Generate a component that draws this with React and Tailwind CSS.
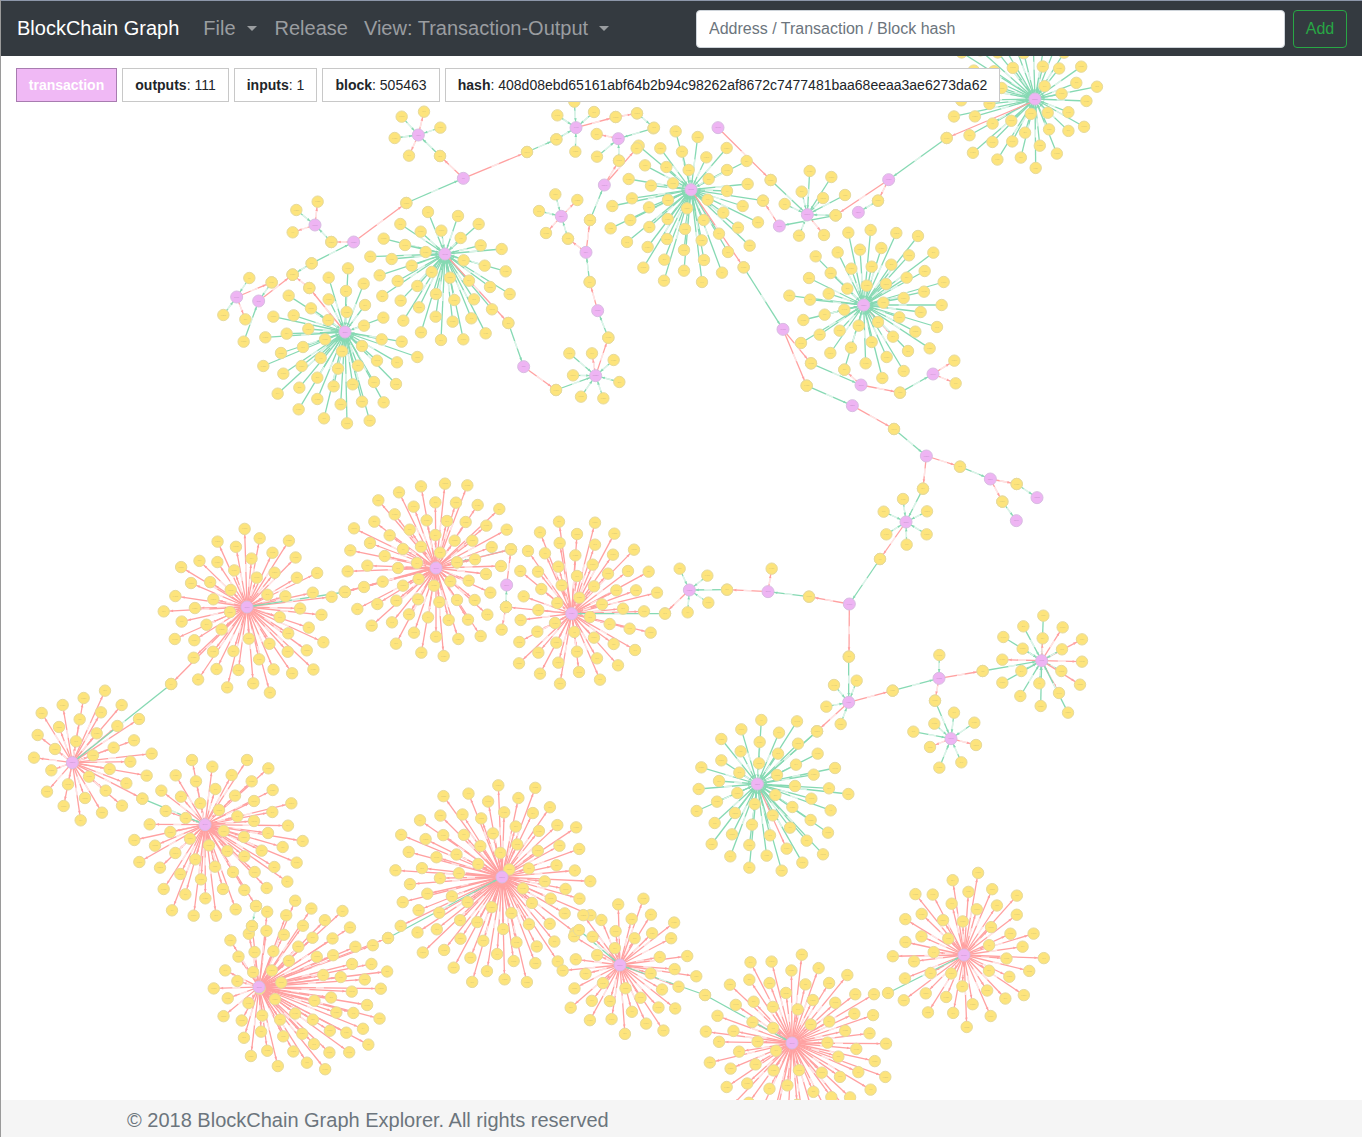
import { useMemo } from 'react';

const GREEN = '#86d9b3';
const PINK = '#ffa1a1';

const at = (ox, oy) => (flat) => {
  const out = [];
  for (let i = 0; i < flat.length; i += 2) out.push([ox + flat[i] / 3, oy + flat[i + 1] / 3]);
  return out;
};
const z7 = at(200, 100);
const z8 = at(700, 100);
const z9 = at(660, 550);
const z10 = at(20, 670);
const z11 = at(600, 100);
const z12 = at(340, 470);
const raw = (flat) => {
  const out = [];
  for (let i = 0; i < flat.length; i += 2) out.push([flat[i], flat[i + 1]]);
  return out;
};

// hubs read off the picture: center, leaves, which leaves are pink
const hubs = [
  { c: z7([735, 462]), color: GREEN, pink: [[546, 588]], map: z7, leaves: [684,336,774,348,836,372,601,372,724,392,662,395,782,414,551,416,842,436,905,447,615,435,677,456,791,481,511,470,575,477,854,497,635,497,917,514,695,516,539,526,750,533,807,542,593,543,870,561,652,558,929,582,708,582,547,588,602,602,763,600,822,598,657,622,876,628,610,662,707,650,758,665,814,655,663,697,857,700,723,720,790,718] },
  { c: z7([435, 696]), color: GREEN, pink: [[328, 564]], map: z7, leaves: [444,505,386,533,328,564,491,551,438,573,266,587,386,598,495,615,333,625,220,650,281,646,440,636,385,660,550,653,325,687,492,677,260,701,196,712,375,718,545,718,605,725,486,738,309,741,243,759,426,754,362,774,652,771,531,782,591,787,190,798,305,798,474,797,414,806,250,821,352,833,522,846,588,852,298,863,458,853,401,859,233,881,352,897,486,905,551,907,422,913,296,928,372,955,441,970,509,962] },
  { c: z8([491, 615]), color: GREEN, pink: [[579, 710]], map: z8, leaves: [512,390,445,398,589,399,654,408,544,444,480,449,413,457,347,469,627,466,700,458,515,500,454,506,574,494,392,519,674,513,620,533,327,534,500,557,442,566,558,552,731,546,386,581,672,575,268,587,330,599,550,608,611,594,725,615,433,629,662,636,374,644,598,652,310,660,534,666,476,677,419,692,711,681,646,695,359,704,579,710,303,729,515,726,453,743,689,745,391,759,624,753,560,771,497,790,433,809,611,813,547,834] },
  { c: z9([292, 702]), color: GREEN, pink: [[380, 896]], map: z9, leaves: [304,510,411,514,244,538,357,548,184,567,299,576,242,604,414,581,473,611,354,611,184,631,297,640,408,644,124,652,525,654,238,668,351,675,461,674,177,693,405,708,116,717,507,715,565,732,232,729,346,735,171,755,454,746,110,783,284,762,397,771,512,781,225,789,338,796,164,819,452,810,276,824,390,833,504,848,216,853,330,856,155,882,268,885,440,872,380,896,489,913,211,919,320,917,427,938,268,953,365,962,471,544] },
  { c: z10([157, 278]), color: PINK, pink: [], map: z10, leaves: [255,62,191,84,128,105,305,105,65,129,243,127,179,148,357,147,117,171,292,168,53,195,230,190,168,214,342,211,105,237,281,233,219,256,395,251,42,263,331,275,94,301,269,297,207,320,380,317,319,340,144,343,81,365,257,362,195,384,367,386,306,407,131,408,246,428,182,451] },
  { c: z10([555, 464]), color: PINK, pink: [], map: z10, leaves: [516,270,681,270,577,290,745,295,467,316,635,315,528,334,695,334,586,357,424,362,758,360,483,380,645,377,814,400,541,400,702,393,597,420,757,426,437,423,497,444,652,439,389,463,702,453,804,467,451,486,611,483,744,489,672,501,343,510,848,513,510,506,405,527,788,531,567,526,466,549,725,542,622,543,358,576,526,568,673,559,830,578,763,591,420,593,585,590,639,606,704,606,481,612,802,635,543,628,431,657,740,654,609,657,673,660,496,673,556,685,708,708,456,721,647,718,521,737,588,737] },
  { c: z11([273, 269]), color: GREEN, pink: [[431,502]], map: z11, leaves: [227,94,293,111,116,137,380,144,181,145,246,155,319,172,135,196,199,201,266,210,381,210,440,183,86,237,219,250,326,237,443,252,153,257,381,273,96,295,204,300,323,299,489,302,37,318,147,322,428,318,261,325,370,338,91,360,203,357,311,360,474,367,32,385,148,381,414,383,255,387,357,401,201,417,305,421,81,426,449,437,143,441,384,456,252,450,431,502,193,479,312,480,130,503,366,518,252,512,192,542,306,546] },
  { c: z12([288, 294]), color: PINK, pink: [], map: z12, leaves: [315,41,382,46,243,49,177,67,115,91,286,97,348,98,413,105,478,117,221,110,164,133,103,155,377,156,260,151,321,153,439,167,42,175,209,179,500,179,149,196,286,195,344,212,397,212,90,219,243,230,455,231,189,237,31,241,300,248,134,258,405,268,351,277,231,279,82,287,483,288,174,294,23,304,438,312,236,327,331,334,386,332,128,335,189,347,282,347,72,351,14,365,451,368,112,402,169,392,234,388,351,390,404,390,298,396,52,417,207,433,442,434,264,442,326,450,384,449,156,457,95,467,222,488,288,500,422,498,355,507,168,521,244,548,311,558] },
  { c: z12([695, 431]), color: PINK, pink: [], map: z12, leaves: [657,155,765,158,823,191,600,187,711,192,659,219,765,224,882,239,564,243,615,250,706,256,819,254,926,305,655,290,758,284,864,303,541,303,594,305,711,318,804,311,665,346,762,349,829,361,888,361,604,357,951,368,718,383,551,379,652,399,786,403,849,416,595,420,912,424,750,441,542,450,645,459,809,462,869,476,592,485,703,486,932,488,762,503,821,522,538,516,649,518,885,540,595,548,711,545,771,565,537,580,655,578,834,586,600,611,717,606,780,629,660,641] },
  // small stars
  { c: z9([1145, 332]), color: GREEN, pink: [[1148,265],[1208,232],[1266,268],[1266,335],[1260,404],[1197,429],[1027,329]], map: z9, leaves: [1150,197,1090,229,1208,232,1030,261,1148,265,1266,268,1088,296,1206,298,1027,329,1266,335,1084,363,1204,363,1027,398,1138,400,1260,404,1197,429,1081,438,1142,468,1224,488] },
  { c: z9([873, 566]), color: GREEN, pink: [[948,585],[810,591]], map: z9, leaves: [882,488,943,518,823,521,760,545,948,585,810,591,904,637,838,653] },
  { c: z9([566, 457]), color: GREEN, pink: [], map: z9, leaves: [522,405,590,392,499,470,542,522] },
  { c: z9([88, 120]), color: GREEN, pink: [[15,190]], map: z9, leaves: [59,56,142,77,145,158,83,187,15,190] },
  { c: z7([655, 105]), color: GREEN, pink: [[672,35],[627,167]], map: z7, leaves: [605,50,672,35,721,83,584,114,627,167] },
  { c: z7([345, 375]), color: GREEN, pink: [[353,305],[278,397]], map: z7, leaves: [353,305,289,330,278,397] },
  { c: z7([1128, 83]), color: GREEN, pink: [[1247,51]], map: z7, leaves: [1072,46,1123,5,1182,36,1126,155,1247,51] },
  { c: z7([1255, 116]), color: GREEN, pink: [[1190,102]], map: z7, leaves: [1190,102,1191,170,1257,182,1360,85] },
  { c: z7([1084, 349]), color: GREEN, pink: [[1132,300],[1038,399]], map: z7, leaves: [1066,283,1132,300,1017,333,1038,399] },
  { c: z7([1187, 827]), color: GREEN, pink: [[1176,760]], map: z7, leaves: [1108,760,1176,760,1241,780,1119,826,1258,846,1143,890,1210,895] },
  { c: z7([110, 591]), color: GREEN, pink: [[215,547],[136,658]], map: z7, leaves: [148,534,215,547,70,645,136,658] },
  { c: z8([322, 344]), color: GREEN, pink: [[372,405]], map: z8, leaves: [329,213,394,231,305,275,369,294,435,285,254,312,407,346,297,407,372,405] },
  { c: z8([618, 1266]), color: GREEN, pink: [], map: z8, leaves: [609,1197,681,1234,551,1235,559,1303,680,1303,620,1334] },
];

// dense hubs that are filled in with an even spiral
const clouds = [
  { c: [1035, 99], o: [1022, 96], r: 76, n: 46, color: GREEN, seed: 1.1 },
  { c: [247, 607], o: [250, 612], r: 87, n: 56, color: PINK, seed: 3.1 },
  { c: [502, 877], o: [494, 884], r: 105, n: 84, color: PINK, seed: 5.5 },
  { c: [259, 987], o: [303, 987], r: 89, n: 70, color: PINK, seed: 0.9 },
  { c: [620, 965], o: [627, 968], r: 72, n: 40, color: PINK, seed: 1.7 },
  { c: [792, 1043], o: [796, 1045], r: 96, n: 68, color: PINK, seed: 2.9 },
  { c: [964, 955], o: [966, 951], r: 80, n: 46, color: PINK, seed: 3.7 },
];

// transaction nodes that are not the middle of a hub
const loosePurple = [
  ...z7([790,235,461,426,176,603,1213,255,1158,457,1193,632,971,800]),
  ...z8([54,83,238,378,566,239,475,337,249,688,483,855,699,822,457,917,679,1068,871,1137,1011,1193,949,1262]),
  ...z9([568,162,324,125,837,385]),
  ...z12([500,345]),
];

const chains = [
  [z7, GREEN, [790,235,619,309, 461,426,335,490, 720,168,655,105, 981,156,1069,118, 1069,118,1128,83, 394,426,345,375, 176,603,215,547, 176,603,131,725, 335,490,278,524, 1213,255,1170,360, 1104,416,1084,349, 1158,457,1169,546, 1193,632,1225,713, 925,669,971,800, 1068,870,1187,827, 1311,40,1362,83]],
  [z7, PINK, [619,309,461,426, 461,426,394,426, 790,235,720,168, 790,235,981,156, 1257,182,1213,255, 1310,145,1213,255, 1170,360,1158,457, 1158,457,1104,416, 1169,546,1193,632, 1225,713,1187,827, 971,800,1068,870, 278,524,176,603, 328,564,278,524, 735,462,925,669, 1247,51,1311,40]],
  [z8, GREEN, [212,240,322,344, 407,346,238,378, 534,302,475,337, 566,239,740,114, 131,502,249,688, 333,790,483,855, 600,878,699,822, 320,857,457,917, 582,987,679,1068, 780,1100,871,1137, 950,1152,1011,1193, 907,1205,949,1262, 669,1166,618,1266]],
  [z8, PINK, [54,83,212,240, 238,378,189,302, 566,239,407,346, 566,239,534,302, 249,688,333,790, 483,855,433,809, 483,855,600,878, 699,822,763,782, 699,822,767,850, 249,688,320,857, 457,917,582,987, 679,1068,780,1100, 871,1137,950,1152, 871,1137,907,1205, 679,1068,669,1166, 618,1266,540,1377, 740,114,1003,3]],
  [z9, GREEN, [660,27,568,162, 566,320,566,457, 698,422,837,385, 968,363,1145,332, 825,452,873,566, 838,315,837,385, 447,140,324,125, 201,119,88,120, 471,544,292,702]],
  [z9, PINK, [568,162,567,320, 568,162,447,140, 324,125,335,56, 324,125,201,119, 566,457,698,422, 566,457,471,544, 837,385,968,363, 837,385,825,452]],
  [z10, GREEN, [454,42,157,278, 367,386,555,464, 708,708,696,768]],
  [z12, GREEN, [513,238,351,277, 498,411,500,345, 695,431,975,431]],
  [z12, PINK, [513,238,500,345, 695,431,498,411, 498,411,485,479, 288,294,513,238]],
  [raw, PINK, [171,684,247,607, 252,926,259,987, 259,987,388,938, 345,592,435,567]],
  [raw, GREEN, [345,592,247,607, 388,938,502,877, 579,930,620,965, 705,995,792,1043, 705,995,620,965, 888,993,964,955]],
];

const makeRand = (seed) => {
  let s = seed;
  return () => {
    s = (s * 16807) % 2147483647;
    return s / 2147483647;
  };
};

function buildGraph() {
  const rand = makeRand(48271);
  const yellow = [];
  const purple = [...loosePurple];
  const edges = [];

  hubs.forEach((h) => {
    const center = h.c[0];
    purple.push(center);
    const pinkKeys = new Set(h.pink.map((p) => h.map(p)[0].join()));
    h.map(h.leaves).forEach((p) => {
      yellow.push(p);
      edges.push([center, p, pinkKeys.has(p.join()) ? PINK : h.color]);
    });
  });

  clouds.forEach((cl) => {
    purple.push(cl.c);
    for (let i = 0; i < cl.n; i++) {
      const r = cl.r * Math.sqrt((i + 3.5) / (cl.n + 3.5));
      const a = i * 2.39996 + cl.seed;
      const p = [cl.o[0] + r * Math.cos(a) + (rand() - 0.5) * 3, cl.o[1] + r * Math.sin(a) + (rand() - 0.5) * 3];
      yellow.push(p);
      edges.push([cl.c, p, cl.color]);
    }
  });

  const isPurple = (p) => purple.some((q) => Math.hypot(q[0] - p[0], q[1] - p[1]) < 3);
  chains.forEach(([map, color, flat]) => {
    const pts = map(flat);
    for (let i = 0; i + 1 < pts.length; i += 2) {
      edges.push([pts[i], pts[i + 1], color]);
      if (!isPurple(pts[i])) yellow.push(pts[i]);
      if (!isPurple(pts[i + 1])) yellow.push(pts[i + 1]);
    }
  });

  // green arrows land on the transaction, pink ones on the output
  const withArrows = edges.map(([a, b, color]) => {
    const aP = isPurple(a);
    const bP = isPurple(b);
    const toA = color === GREEN ? aP && !bP : !aP && bP;
    return [a, b, color, toA ? a : b, toA ? b : a];
  });

  return { yellow, purple, edges: withArrows };
}

const amount = (i) => {
  const n = (i * 7919) % 10000;
  return i % 3 === 0 ? `${n % 90}.${n % 7}` : `0.${n}`;
};

const visible = (p) => p[1] > 62 && p[1] < 1096;

function Graph() {
  const { yellow, purple, edges } = useMemo(buildGraph, []);
  return (
    <svg className="absolute top-0 left-0" width="1361" height="1044" viewBox="1 56 1361 1044" fontFamily="Liberation Sans, sans-serif">
      {edges.map(([a, b, color, tip, tail], i) => {
        const mx = (a[0] + b[0]) / 2;
        const my = (a[1] + b[1]) / 2;
        const d = Math.hypot(tip[0] - tail[0], tip[1] - tail[1]) || 1;
        const ux = (tip[0] - tail[0]) / d;
        const uy = (tip[1] - tail[1]) / d;
        const tx = tip[0] - ux * 6.4;
        const ty = tip[1] - uy * 6.4;
        const head = `${tx},${ty} ${tx - ux * 3 - uy * 1.3},${ty - uy * 3 + ux * 1.3} ${tx - ux * 3 + uy * 1.3},${ty - uy * 3 - ux * 1.3}`;
        return (
          <g key={i}>
            <line x1={a[0]} y1={a[1]} x2={b[0]} y2={b[1]} stroke={color} strokeWidth="1.3" />
            <line x1={mx - ux * 4} y1={my - uy * 4} x2={mx + ux * 4} y2={my + uy * 4} stroke="#fff" strokeWidth="1.5" opacity="0.7" />
            <polygon points={head} fill={color} />
          </g>
        );
      })}
      {yellow.map((p, i) => (
        <g key={i}>
          <circle cx={p[0]} cy={p[1]} r="5.7" fill="#fde47c" stroke="#e6da9c" strokeWidth="1" />
          {visible(p) && <text x={p[0]} y={p[1] + 0.6} fontSize="1.7" textAnchor="middle" fill="#d0c274">{amount(i)}</text>}
        </g>
      ))}
      {purple.map((p, i) => (
        <g key={i}>
          <circle cx={p[0]} cy={p[1]} r="6" fill="#eeb4f3" stroke="#d8bde2" strokeWidth="1" />
          {visible(p) && <text x={p[0]} y={p[1] + 0.6} fontSize="1.7" textAnchor="middle" fill="#c08fc8">{`${(i * 4513) % 9000}e${i % 9}`}</text>}
        </g>
      ))}
    </svg>
  );
}

function Badge({ label, value, width }) {
  return (
    <div className={`h-[34px] flex items-center justify-center bg-white border border-[#c8c8c8] text-[14px] text-[#212529] whitespace-nowrap ${width}`}>
      <span>
        <b>{label}</b>: {value}
      </span>
    </div>
  );
}

function Caret() {
  return <span className="ml-[11px] w-0 h-0 border-x-[5px] border-x-transparent border-t-[5px] border-t-[#9a9da0]" />;
}

export default function App() {
  return (
    <div className="h-[1137px] flex flex-col overflow-hidden border-l border-[#9a9a9a] font-['Liberation_Sans',Arial,sans-serif] bg-white">
      <nav className="h-14 shrink-0 bg-[#343a40] border-t border-[#8d97aa] flex items-center pl-4 pr-[15px] text-[20px] text-[#9a9da0] relative z-20">
        <span className="text-white mr-6 pb-0.5">BlockChain Graph</span>
        <div className="flex items-center">
          <span className="pb-0.5">File</span>
          <Caret />
        </div>
        <span className="ml-[18px] pb-0.5">Release</span>
        <div className="flex items-center ml-4">
          <span className="pb-0.5">View: Transaction-Output</span>
          <Caret />
        </div>
        <input
          placeholder="Address / Transaction / Block hash"
          className="ml-auto w-[589px] h-[38px] px-3 bg-white rounded border border-[#ced4da] text-[16px] placeholder-[#6c757d]"
        />
        <button className="ml-2 w-[54px] h-[38px] rounded border border-[#28a745] text-[#28a745] text-[16px]">Add</button>
      </nav>

      <main className="flex-1 relative overflow-hidden">
        <Graph />
        <div className="relative z-10 flex gap-[5px] pl-[15px] pt-3">
          <div className="h-[34px] w-[101px] flex items-center justify-center bg-[#f0b9f5] border border-[#a87cb0] text-[14px] font-bold text-white">
            transaction
          </div>
          <Badge label="outputs" value="111" width="w-[107px]" />
          <Badge label="inputs" value="1" width="w-[83px]" />
          <Badge label="block" value="505463" width="w-[118px]" />
          <Badge label="hash" value="408d08ebd65161abf64b2b94c98262af8672c7477481baa68eeaa3ae6273da62" width="w-[555px]" />
        </div>
      </main>

      <footer className="h-[37px] shrink-0 bg-[#f5f5f5] flex items-center pl-[126px] pt-0.5 text-[20px] text-[#6c757d] relative z-20">
        © 2018 BlockChain Graph Explorer. All rights reserved
      </footer>
    </div>
  );
}
